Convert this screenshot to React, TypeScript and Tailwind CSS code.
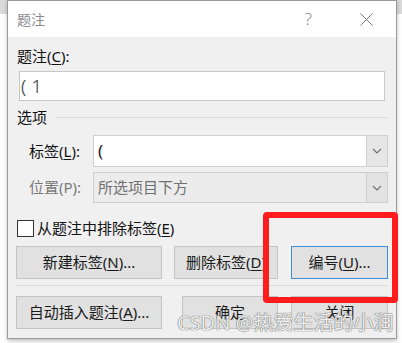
import { ReactNode } from "react";

const font = "font-['Noto_Sans','Noto_Sans_CJK_SC',sans-serif]";

function Key({ k }: { k: string }) {
  return <span className="underline underline-offset-2 decoration-1">{k}</span>;
}

function Btn({ children, w, primary = false }: { children: ReactNode; w: string; primary?: boolean }) {
  return (
    <div
      className={`${w} h-[33px] flex items-center justify-center text-[15px] text-[#1a1a1a] bg-[#e1e1e1] border ${
        primary ? "border-[#3d8fdc]" : "border-[#c4c4c4]"
      } whitespace-nowrap overflow-hidden`}
    >
      {children}
    </div>
  );
}

function Chevron() {
  return (
    <svg width="10" height="6" viewBox="0 0 10 6">
      <path d="M1 1 L5 5 L9 1" fill="none" stroke="#6e6e6e" strokeWidth="1.1" />
    </svg>
  );
}

export default function App() {
  return (
    <div className={`w-[402px] h-[343px] bg-[linear-gradient(#dadada_14px,#ffffff_14px)] ${font} overflow-hidden`}>
      <div className="relative ml-[7px] w-[390px] h-[339px] border border-[#9a9a9a] bg-[#f0f0f0] shadow-[0_2px_4px_rgba(0,0,0,0.25)] flex flex-col">
        {/* title bar */}
        <div className="h-[36px] bg-white flex items-center shrink-0">
          <span className="ml-[9px] text-[14px] text-[#8a8a92]">题注</span>
          <span className="ml-auto mr-[48px] text-[17px] text-[#8a8a8a] font-light">?</span>
          <svg className="mr-[23px]" width="13" height="13" viewBox="0 0 13 13">
            <path d="M0.5 0.5 L12.5 12.5 M12.5 0.5 L0.5 12.5" stroke="#7a7a7a" strokeWidth="1" />
          </svg>
        </div>

        <div className="pl-[8px] pr-[8px] flex flex-col">
          <div className="mt-[8px] h-[22px] ml-[1px] flex items-center text-[15px] text-[#111]">
            题注(<Key k="C" />):
          </div>
          <div className="mt-[4px] ml-[3px] w-[366px] h-[30px] bg-white border border-[#c8c8c8] flex items-center pl-[1px] text-[19px] text-[#333] font-light">
            ( 1
          </div>

          <div className="mt-[5px] flex items-center h-[22px]">
            <span className="ml-[1px] text-[15px] text-[#111]">选项</span>
            <div className="flex-1 ml-[9px] h-px bg-[#dcdcdc]" />
          </div>

          <div className="mt-[7px] flex items-center h-[32px]">
            <span className="ml-[13px] w-[64px] text-[15px] text-[#111]">
              标签(<Key k="L" />):
            </span>
            <div className="w-[295px] h-[32px] bg-white border border-[#cfcfcf] flex items-center">
              <span className="flex-1 pl-[4px] text-[17px] text-[#222]">(</span>
              <div className="w-[21px] h-full bg-[#e6e6e6] border-l border-[#d0d0d0] flex items-center justify-center">
                <Chevron />
              </div>
            </div>
          </div>

          <div className="mt-[5px] flex items-center h-[31px]">
            <span className="ml-[13px] w-[64px] text-[15px] text-[#7a7a7a]">位置(P):</span>
            <div className="w-[295px] h-[31px] bg-[#ececec] border border-[#cfcfcf] flex items-center">
              <span className="flex-1 pl-[4px] text-[15px] text-[#707070]">所选项目下方</span>
              <div className="w-[21px] h-full bg-[#e3e3e3] border-l border-[#d0d0d0] flex items-center justify-center">
                <Chevron />
              </div>
            </div>
          </div>

          <div className="mt-[15px] flex items-center h-[20px]">
            <div className="ml-[1px] w-[17px] h-[17px] bg-white border border-[#333]" />
            <span className="ml-[3px] text-[15px] text-[#111]">
              从题注中排除标签(<Key k="E" />)
            </span>
          </div>

          <div className="mt-[8px] flex items-center">
            <Btn w="w-[146px]">
              新建标签(<Key k="N" />)...
            </Btn>
            <div className="ml-[12px]">
              <Btn w="w-[104px]">
                删除标签(<Key k="D" />)
              </Btn>
            </div>
            <div className="ml-[13px]">
              <Btn w="w-[97px]" primary>
                编号(<Key k="U" />)...
              </Btn>
            </div>
          </div>

          <div className="mt-[6px] h-px bg-[#dcdcdc]" />

          <div className="mt-[10px] flex items-center">
            <Btn w="w-[146px]">
              自动插入题注(<Key k="A" />)...
            </Btn>
            <div className="ml-[20px]">
              <Btn w="w-[96px]">确定</Btn>
            </div>
            <div className="ml-[13px]">
              <Btn w="w-[97px]">关闭</Btn>
            </div>
          </div>
        </div>

        {/* red highlight */}
        <div className="absolute left-[255px] top-[211px] w-[135px] h-[91px] border-[6px] border-[#ff1c1c] rounded-[4px]" />

        {/* watermark */}
        <div className="absolute left-[169px] top-[309px] text-[20px] leading-[26px] text-[#ececec] whitespace-nowrap [text-shadow:0_0_1px_#6a6a6a,0_0_1px_#6a6a6a]">
          CSDN @热爱生活的小润
        </div>
      </div>
    </div>
  );
}
